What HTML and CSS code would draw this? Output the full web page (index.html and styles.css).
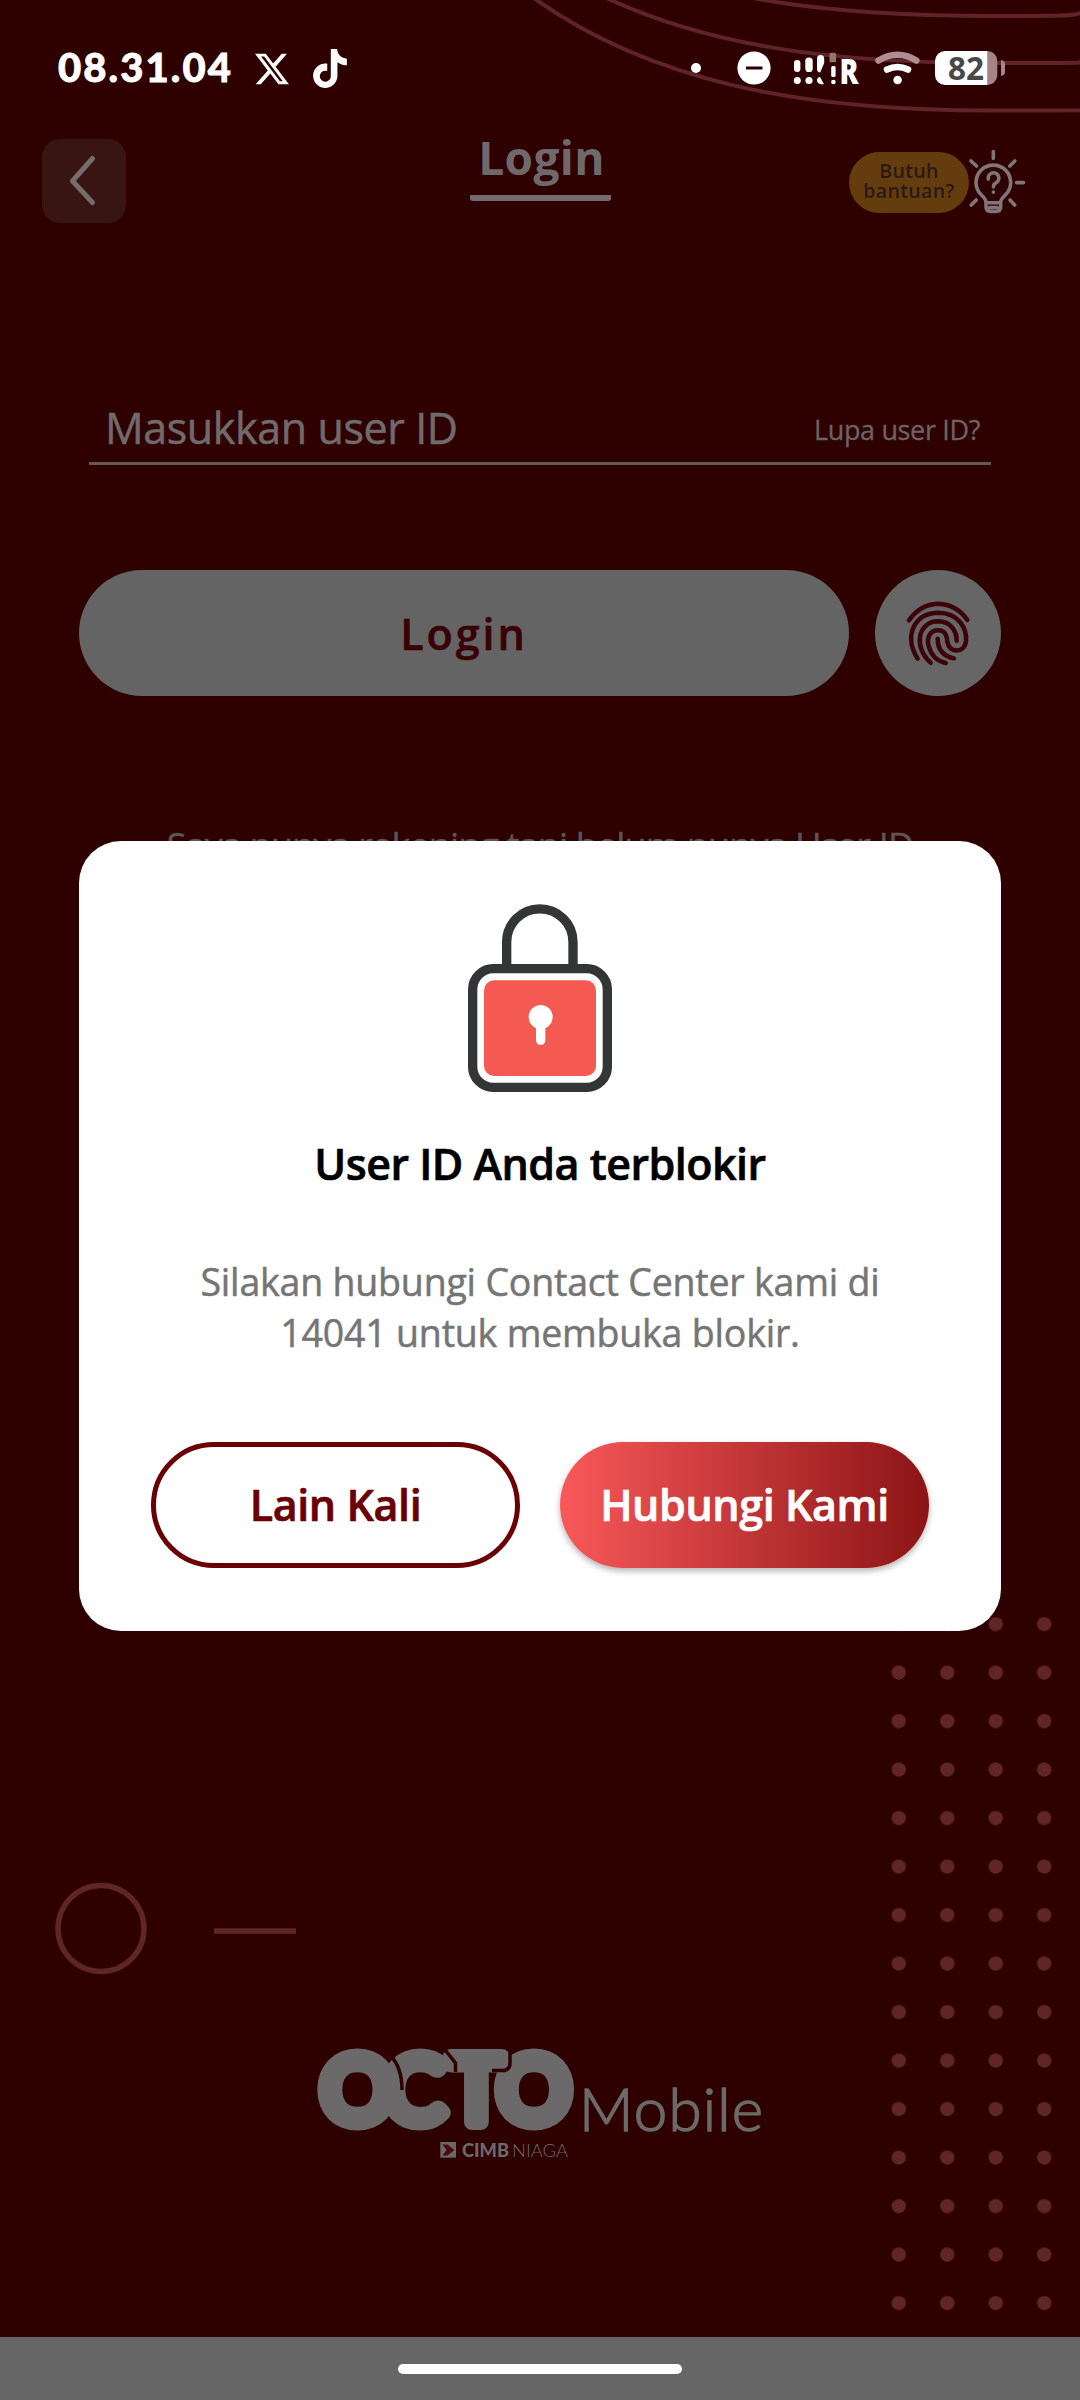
FILE: index.html
```html
<!DOCTYPE html>
<html lang="id">
<head>
<meta charset="utf-8">
<title>OCTO Mobile - Login</title>
<link rel="stylesheet" href="styles.css">
</head>
<body>
<div class="screen">
  <svg class="backdrop" viewBox="0 0 1080 2400" aria-hidden="true">
    <defs>
      <pattern id="dots" x="874.6" y="1599.9" width="48.47" height="48.5" patternUnits="userSpaceOnUse">
        <circle cx="24.2" cy="24.2" r="7.2"/>
      </pattern>
    </defs>
    <g class="backdrop-lines">
      <path d="M515-16C643 85 809 110.500 989 110.500S1066 109.500 1084 108"/>
      <path d="M592-9C705 48 840 63 989 63S1066 62 1084 60.500"/>
      <path d="M747-3C819 11 902 16 995 16S1066 15 1084 13"/>
      <circle class="backdrop-ring" cx="101" cy="1928.500" r="43"/>
      <path class="backdrop-dash" d="M214 1931H296"/>
    </g>
    <rect x="874.6" y="1599.9" width="193.8" height="727.5" fill="url(#dots)"/>
  </svg>

  <header class="status">
    <span class="clock">08.31.04</span>
    <svg class="status-x" viewBox="1.25 2.25 21.6 19.5"><path d="M18.244 2.25h3.308l-7.227 8.26 8.502 11.24H16.17l-5.214-6.817L4.99 21.75H1.68l7.73-8.835L1.254 2.25H8.08l4.713 6.231zm-1.161 17.52h1.833L7.084 4.126H5.117z"/></svg>
    <svg class="status-tiktok" viewBox="1.5 0 21 24"><path d="M12.525.02c1.31-.02 2.61-.01 3.91-.02.08 1.53.63 3.09 1.750 4.170 1.120 1.110 2.700 1.620 4.240 1.790v4.030c-1.440-.05-2.890-.35-4.200-.97-.57-.26-1.100-.59-1.620-.93-.01 2.920.01 5.840-.02 8.750-.08 1.400-.54 2.790-1.350 3.940-1.310 1.920-3.580 3.170-5.910 3.210-1.430.08-2.860-.31-4.080-1.030-2.020-1.190-3.440-3.370-3.650-5.710-.02-.5-.03-1-.01-1.490.18-1.900 1.120-3.720 2.580-4.960 1.660-1.440 3.980-2.130 6.150-1.720.02 1.480-.04 2.960-.04 4.440-.99-.32-2.150-.23-3.020.37-.63.41-1.110 1.040-1.360 1.750-.21.51-.15 1.070-.14 1.610.24 1.640 1.820 3.020 3.500 2.870 1.120-.01 2.190-.66 2.770-1.610.19-.33.4-.67.41-1.060.1-1.790.06-3.570.07-5.360.01-4.030-.01-8.050.02-12.070z"/></svg>
    <svg class="status-tray" viewBox="690 44 320 48">
      <circle cx="696" cy="68" r="5"/>
      <circle cx="754" cy="68" r="16.600"/>
      <path d="M746 68H762.500" stroke="#2e0000" stroke-width="3"/>
      <g>
        <rect x="794" y="60" width="6.400" height="12" rx="3.200"/><circle cx="797.300" cy="80.500" r="3.500"/>
        <rect x="805.300" y="57.500" width="7.400" height="14.500" rx="3.600"/><circle cx="809" cy="80.500" r="3.600"/>
        <path d="M817 58.500a3.600 3.600 0 0 1 7.200 0V63l-4 9.500c-2 0-3.200-1.500-3.200-3.500zM820 77l4 7.200c-4 .6-7-1-7-3.900 0-2 1.300-3.300 3-3.300z"/>
        <rect x="829.500" y="52.800" width="6.600" height="9.400" rx="1.500" fill="#91756a"/>
        <rect x="831.200" y="66" width="4.400" height="11" rx="1.500"/><circle cx="833.400" cy="82" r="2.300"/>
      </g>
      <text class="tray-roam" x="839.500" y="84" textLength="19" lengthAdjust="spacingAndGlyphs">R</text>
      <g fill="none" stroke-linecap="round">
        <path d="M878.500 60.500Q897.600 49 916.300 60.500" stroke="#b08d92" stroke-width="6.500"/>
        <path d="M887 69.500Q897.600 64.500 908 69.500" stroke="#fff" stroke-width="6.500"/>
      </g>
      <circle cx="897.600" cy="80" r="4.300"/>
      <path d="M987 51a10 10 0 0 1 10.300 10V75a10 10 0 0 1-10.300 10z" fill="#a58588"/>
      <path d="M945 51H987.200V85H945a10 10 0 0 1-10-10V61a10 10 0 0 1 10-10z"/>
      <path d="M1001 60q4 .5 4 4v8q0 3.500-4 4z" fill="#a58588"/>
      <text class="tray-battery" x="948" y="79.500" textLength="36" lengthAdjust="spacingAndGlyphs">82</text>
    </svg>
  </header>

  <nav class="topbar">
    <button class="back" aria-label="Kembali"><svg viewBox="0 0 84 84"><path d="M50.500 19.500L30.500 42L50.500 63.500"/></svg></button>
    <h1 class="page-title">Login</h1>
    <div class="help">
      <span class="help-pill">Butuh<br>bantuan?</span>
      <svg class="help-bulb" viewBox="968 149 58 66">
        <path d="M986 206.500v-4.500c0-3-2.500-5-5-7.500a17.300 17.300 0 1 1 24.700 0c-2.500 2.500-5 4.500-5 7.500v4.500q0 5-5 5h-4.700q-5 0-5-5zM986 202.800h14.700M989.500 207.500h7.700M993.300 151.500v7M1016.500 182.600h7M1009.800 166l5-5M976.500 166l-5.500-5M971.200 205l5-5M1010 200l4.700 5"/>
        <path d="M988.300 179a5.300 5.300 0 1 1 7.700 3.800q-2.600 1.300-2.600 4.200M993.400 192v.3"/>
      </svg>
    </div>
  </nav>

  <main class="form">
    <div class="field">
      <span class="field-label">Masukkan user ID</span>
      <a class="field-link">Lupa user ID?</a>
    </div>
    <div class="actions">
      <button class="login">Login</button>
      <button class="finger" aria-label="Sidik jari">
        <svg viewBox="75 59 378 378">
          <path d="M177 210Q210 162 264 160Q320 162 352 209"/>
          <path d="M203 325C163 262 187 190 264 187C327 187 351 235 348 272C344 309 298 310 292 275C290 252 284 240 264 240C240 240 229 262 236 287C244 317 262 333 287 338"/>
          <path d="M242 337C190 292 202 214 264 213C303 214 320 242 320 271"/>
          <path d="M263 265C263 300 283 318 312 324"/>
        </svg>
      </button>
    </div>
    <p class="register">Saya punya rekening tapi belum punya User ID</p>
  </main>

  <footer class="brand">
    <svg class="brand-logo" viewBox="300 2030 480 140">
      <text class="brand-octo" x="321 384 449.500 497.500" y="2122">OCTO</text>
      <g class="brand-gaps">
        <path d="M390 2055C398 2063 402 2073 402 2090"/>
        <path d="M442 2046L455.500 2063V2072"/>
        <path d="M510 2046V2063Q510 2070.500 502 2070.500H492"/>
      </g>
      <text class="brand-mobile" x="579" y="2130.500" textLength="184" lengthAdjust="spacing">Mobile</text>
      <rect x="440.300" y="2142" width="15.700" height="15.700" fill="#6b6667"/>
      <path d="M442.500 2144.500h5l7 5.500-7 5.500h-5l4-5.500z" fill="#480a10"/>
      <text class="brand-cimb" x="462" y="2157" textLength="47" lengthAdjust="spacingAndGlyphs">CIMB</text>
      <text class="brand-niaga" x="512" y="2157" textLength="56" lengthAdjust="spacingAndGlyphs">NIAGA</text>
    </svg>
  </footer>
  <div class="gesture"><span class="gesture-pill"></span></div>

  <section class="dialog" role="dialog">
    <svg class="lock" viewBox="144 72 432 564">
      <path d="M260 262V186a99.500 99.500 0 0 1 199 0V262" fill="none" stroke="#333536" stroke-width="28"/>
      <rect x="158" y="266" width="404" height="356" rx="62" fill="#fff" stroke="#333536" stroke-width="28"/>
      <rect x="192" y="301" width="336" height="287" rx="30" fill="#f55a52"/>
      <circle cx="362" cy="411" r="36" fill="#fff"/>
      <path d="M362 420V481" stroke="#fff" stroke-width="28" stroke-linecap="round"/>
    </svg>
    <h2 class="dialog-title">User ID Anda terblokir</h2>
    <p class="dialog-text">Silakan hubungi Contact Center kami di<br>14041 untuk membuka blokir.</p>
    <div class="dialog-actions">
      <button class="btn btn-outline">Lain Kali</button>
      <button class="btn btn-primary">Hubungi Kami</button>
    </div>
  </section>
</div>
</body>
</html>
```
FILE: styles.css
```css
* { box-sizing: border-box; }
body { margin: 0; background: #2e0000; font-family: "Open Sans", "Noto Sans", sans-serif; }
h1, h2, p { margin: 0; }
button { border: 0; padding: 0; margin: 0; font: inherit; white-space: nowrap; }
svg { display: block; flex: none; }

.screen { position: relative; display: flex; flex-direction: column; width: 1080px; height: 2400px; overflow: hidden; background: #2e0000; }
.backdrop { position: absolute; inset: 0; width: 1080px; height: 2400px; fill: #5f2527; }
.backdrop-lines { fill: none; stroke: #5f2329; stroke-width: 4; }
.backdrop-ring, .backdrop-dash { stroke: #5f2527; stroke-width: 5.5; }
.status, .topbar, .form, .brand, .gesture { position: relative; }

.status { display: flex; align-items: center; height: 136px; padding: 0 70px 0 58px; }
.status svg { fill: #fff; }
.clock { width: 197px; margin-top: -3px; color: #fff; font: 900 40px/56px Lato, sans-serif; letter-spacing: 2.1px; white-space: nowrap; -webkit-text-stroke: .8px; }
.status-x { width: 34px; height: 32px; margin-top: 2px; }
.status-tiktok { width: 34px; height: 39px; margin-left: 24px; margin-top: 1px; }
.status-tray { width: 320px; height: 48px; margin-left: auto; overflow: visible; }
.tray-roam { font: 800 36px "Open Sans", sans-serif; }
.tray-battery { fill: #484848; font: 700 32px "Open Sans", sans-serif; }

.topbar { display: flex; align-items: center; justify-content: space-between; height: 90px; padding: 0 54px 0 42px; }
.back { width: 84px; height: 84px; border-radius: 18px; background: #381413; }
.back svg { fill: none; stroke: #766c6d; stroke-width: 5; stroke-linecap: round; stroke-linejoin: round; }
.page-title { align-self: flex-start; width: 141px; height: 74px; margin: -9px 0 0 105px; padding-left: 3px; border-bottom: 6px solid #746b6f; border-radius: 0 0 3px 3px; color: #70696c; font-size: 46px; font-weight: 700; line-height: 60px; letter-spacing: .4px; text-align: center; }
.help { display: flex; align-items: center; padding-top: 2px; }
.help-pill { display: flex; align-items: center; justify-content: center; width: 120px; height: 61px; padding-bottom: 3px; border-radius: 31px; background: #653c0d; color: #281b17; font-size: 19.5px; font-weight: 600; line-height: 20px; letter-spacing: .4px; text-align: center; }
.help-bulb { width: 58px; height: 66px; margin-left: -1px; fill: none; stroke: #827579; stroke-width: 3.6; stroke-linecap: round; stroke-linejoin: round; }

.form { display: flex; flex-direction: column; }
.field { display: flex; align-items: flex-start; justify-content: space-between; height: 79px; margin: 160px 89px 0; padding: 12px 11px 0 16px; border-bottom: 3px solid #675755; }
.field-label { color: #716a6d; font-size: 43px; font-weight: 500; line-height: 60px; letter-spacing: -.4px; white-space: nowrap; -webkit-text-stroke: .5px; }
.field-link { padding-top: 12px; color: #6c6364; font-size: 27px; font-weight: 400; line-height: 40px; letter-spacing: -.35px; white-space: nowrap; -webkit-text-stroke: .3px; }
.actions { display: flex; gap: 26px; margin: 105px 79px 0; }
.login { flex: 1; height: 126px; border-radius: 63px; background: #646464; color: #390006; font-size: 43px; font-weight: 600; letter-spacing: 3px; -webkit-text-stroke: .6px; }
.finger { width: 126px; height: 126px; border-radius: 50%; background: #666; }
.finger svg { fill: none; stroke: #3d0208; stroke-width: 13.5; stroke-linecap: round; }
.register { margin-top: 125px; color: #5e5556; font-size: 36px; font-weight: 500; line-height: 50px; letter-spacing: -.85px; text-align: center; white-space: nowrap; -webkit-text-stroke: .4px; }

.brand { display: flex; margin: auto 0 167px 300px; }
.brand-logo { width: 480px; height: 140px; fill: #6b6969; }
.brand-octo { stroke: #6b6969; stroke-width: 16; stroke-linejoin: round; font: 400 91px Lato, sans-serif; }
.brand-gaps { fill: none; stroke: #2e0000; stroke-width: 3.5; }
.brand-mobile { stroke: #6b6969; stroke-width: 1.5; font: 300 60px Lato, sans-serif; }
.brand-cimb { font: 900 18.5px Lato, sans-serif; }
.brand-niaga { font: 300 18.5px Lato, sans-serif; }

.gesture { display: flex; align-items: center; justify-content: center; height: 63px; background: #666; }
.gesture-pill { width: 284px; height: 10px; border-radius: 5px; background: #fff; }

.dialog { position: absolute; top: 841px; left: 79px; display: flex; flex-direction: column; align-items: center; width: 922px; height: 790px; padding-top: 63px; border-radius: 42px; background: #fff; }
.lock { width: 144px; height: 188px; }
.dialog-title { margin-top: 42px; color: #000; font-size: 43px; font-weight: 600; line-height: 60px; letter-spacing: -.5px; white-space: nowrap; -webkit-text-stroke: .7px; }
.dialog-text { margin-top: 62px; color: #757575; font-size: 37.5px; line-height: 51px; letter-spacing: -.2px; text-align: center; white-space: nowrap; -webkit-text-stroke: .5px; }
.dialog-actions { display: flex; gap: 40px; margin-top: 84px; }
.btn { width: 369px; height: 126px; padding-bottom: 2px; border-radius: 63px; font-size: 43px; font-weight: 600; letter-spacing: -.4px; -webkit-text-stroke: .7px; }
.btn-outline { border: 5px solid #6a0006; background: #fff; color: #6a0006; }
.btn-primary { background: linear-gradient(90deg, #f95859, #8c1416); box-shadow: 0 3px 6px rgba(0, 0, 0, .3); color: #fff; }
```
